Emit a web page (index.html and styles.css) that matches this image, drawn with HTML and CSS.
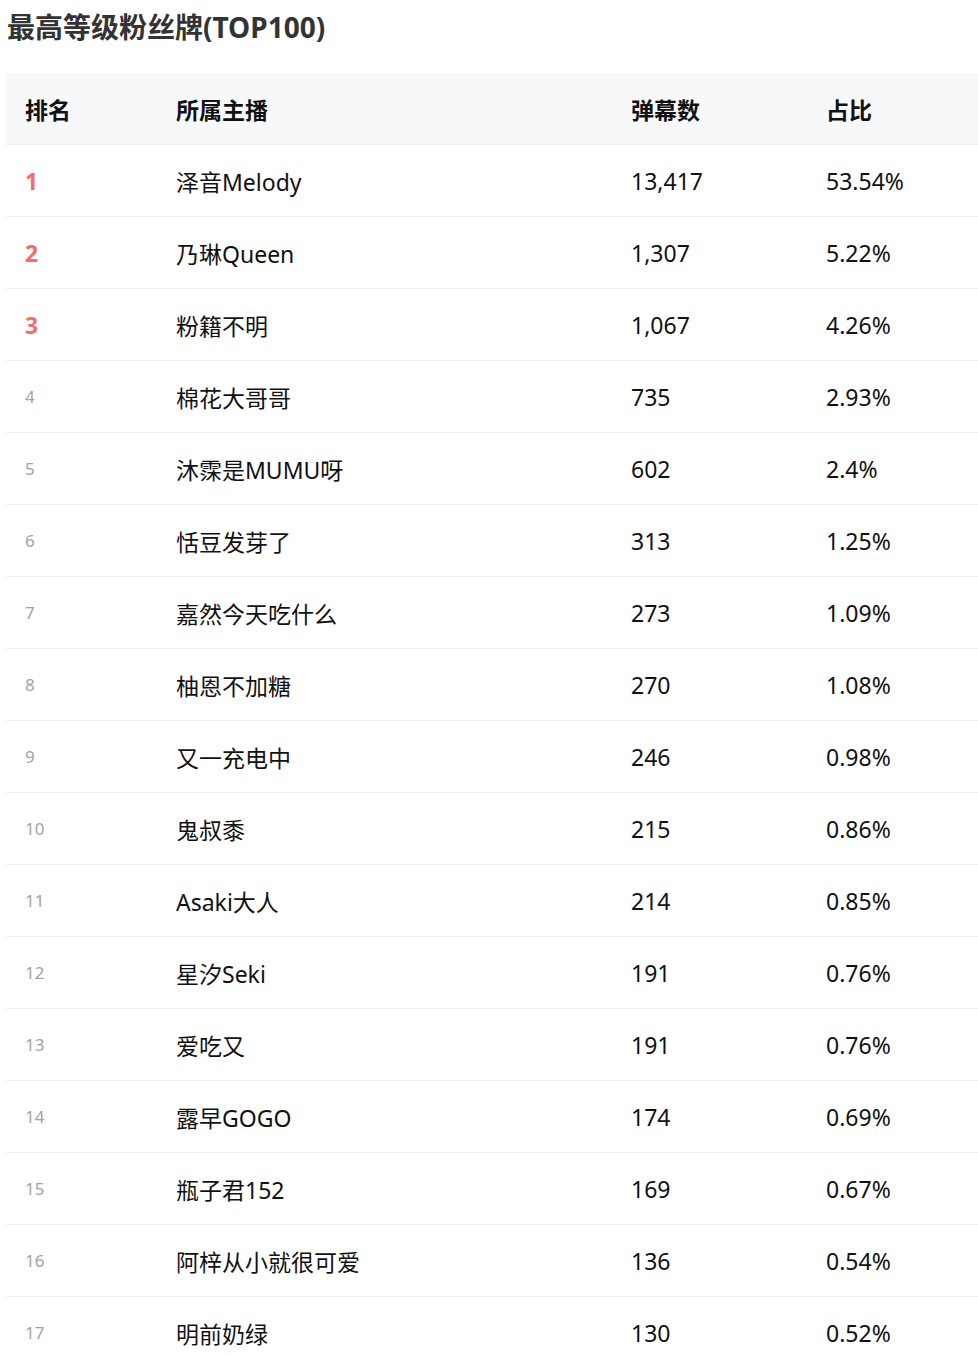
FILE: index.html
```html
<!DOCTYPE html>
<html lang="zh">
<head>
<meta charset="utf-8">
<link rel="stylesheet" href="styles.css">
</head>
<body>
<h2 class="title">最高等级粉丝牌(TOP100)</h2>
<table class="rank-table">
  <colgroup>
    <col class="c-rank"><col class="c-name"><col class="c-count"><col class="c-pct">
  </colgroup>
  <thead>
    <tr><th>排名</th><th>所属主播</th><th>弹幕数</th><th>占比</th></tr>
  </thead>
  <tbody>
    <tr><td class="rank top">1</td><td>泽音Melody</td><td>13,417</td><td>53.54%</td></tr>
    <tr><td class="rank top">2</td><td>乃琳Queen</td><td>1,307</td><td>5.22%</td></tr>
    <tr><td class="rank top">3</td><td>粉籍不明</td><td>1,067</td><td>4.26%</td></tr>
    <tr><td class="rank">4</td><td>棉花大哥哥</td><td>735</td><td>2.93%</td></tr>
    <tr><td class="rank">5</td><td>沐霂是MUMU呀</td><td>602</td><td>2.4%</td></tr>
    <tr><td class="rank">6</td><td>恬豆发芽了</td><td>313</td><td>1.25%</td></tr>
    <tr><td class="rank">7</td><td>嘉然今天吃什么</td><td>273</td><td>1.09%</td></tr>
    <tr><td class="rank">8</td><td>柚恩不加糖</td><td>270</td><td>1.08%</td></tr>
    <tr><td class="rank">9</td><td>又一充电中</td><td>246</td><td>0.98%</td></tr>
    <tr><td class="rank">10</td><td>鬼叔黍</td><td>215</td><td>0.86%</td></tr>
    <tr><td class="rank">11</td><td>Asaki大人</td><td>214</td><td>0.85%</td></tr>
    <tr><td class="rank">12</td><td>星汐Seki</td><td>191</td><td>0.76%</td></tr>
    <tr><td class="rank">13</td><td>爱吃又</td><td>191</td><td>0.76%</td></tr>
    <tr><td class="rank">14</td><td>露早GOGO</td><td>174</td><td>0.69%</td></tr>
    <tr><td class="rank">15</td><td>瓶子君152</td><td>169</td><td>0.67%</td></tr>
    <tr><td class="rank">16</td><td>阿梓从小就很可爱</td><td>136</td><td>0.54%</td></tr>
    <tr><td class="rank">17</td><td>明前奶绿</td><td>130</td><td>0.52%</td></tr>
  </tbody>
</table>
</body>
</html>
```
FILE: styles.css
```css
html, body {
  margin: 0;
  padding: 0;
  background: #fff;
}
body {
  padding: 0 0 0 6px;
  font-family: "Noto Sans", "Noto Sans CJK SC", sans-serif;
  color: #1a1a1a;
  overflow: hidden;
}
.title {
  margin: 0;
  padding: 8px 0 0 1px;
  height: 73px;
  box-sizing: border-box;
  font-size: 28px;
  line-height: 38px;
  font-weight: 700;
  color: #333;
}
.rank-table {
  width: 972px;
  border-collapse: collapse;
  table-layout: fixed;
}
.c-rank { width: 151px; }
.c-name { width: 455px; }
.c-count { width: 195px; }
.c-pct { width: 171px; }
.rank-table th,
.rank-table td {
  height: 71px;
  padding: 0 0 0 19px;
  text-align: left;
  vertical-align: middle;
  border-bottom: 1px solid #ebedf0;
  font-size: 23px;
  white-space: nowrap;
}
.rank-table th {
  background: #f7f8fa;
  font-weight: 700;
  color: #111;
}
.rank-table td {
  font-weight: 400;
  color: #111;
}
.rank-table td.rank {
  font-size: 17px;
  color: #a3a3a3;
}
.rank-table td.rank.top {
  font-size: 23px;
  font-weight: 700;
  color: #f56c6c;
}
```
